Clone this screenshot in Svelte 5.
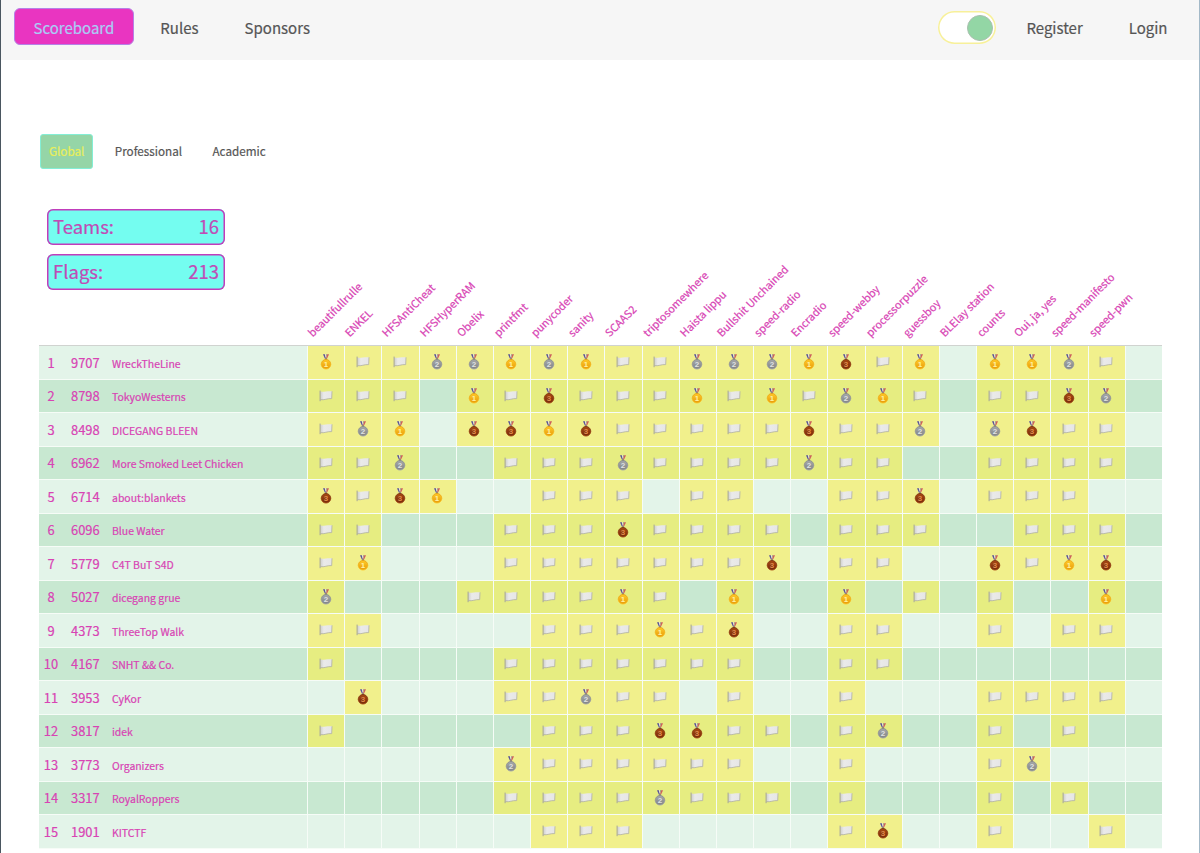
<script lang="ts">

    const navLeft = ['Scoreboard', 'Rules', 'Sponsors']
    const scopes = ['Global', 'Professional', 'Academic']

    const challenges = [
        'beautifullrulle', 'ENKEL', 'HFSAntiCheat', 'HFSHyperRAM', 'Obelix', 'printfmt',
        'punycoder', 'sanity', 'SCAAS2', 'triptosomewhere', 'Haista lippu', 'Bullshit Unchained',
        'speed-radio', 'Encradio', 'speed-webby', 'processorpuzzle', 'guessboy', 'BLElay station',
        'counts', 'Oui, ja, yes', 'speed-manifesto', 'speed-pwn', ''
    ]

    // one character per challenge: 1-3 = medal, f = solved, . = unsolved
    const teams = [
        { name: 'WreckTheLine', score: 9707, solves: '1ff22121ff22213f1.112f.' },
        { name: 'TokyoWesterns', score: 8798, solves: 'fff.1f3fff1f1f21f.ff32.' },
        { name: 'DICEGANG BLEEN', score: 8498, solves: 'f21.3313fffff3ff2.23ff.' },
        { name: 'More Smoked Leet Chicken', score: 6962, solves: 'ff2..fff2ffff2ff..ffff.' },
        { name: 'about:blankets', score: 6714, solves: '3f31..fff.ff..ff3.fff..' },
        { name: 'Blue Water', score: 6096, solves: 'ff...fff3ffff.fff..fff.' },
        { name: 'C4T BuT S4D', score: 5779, solves: 'f1...fffffff3.ff..3f13.' },
        { name: 'dicegang grue', score: 5027, solves: '2...ffff1f.1..1.f.f..1.' },
        { name: 'ThreeTop Walk', score: 4373, solves: 'ff....fff1f3..ff..f.ff.' },
        { name: 'SNHT && Co.', score: 4167, solves: 'f....fffffff..ff.......' },
        { name: 'CyKor', score: 3953, solves: '.3...ff2ff.f..f...ffff.' },
        { name: 'idek', score: 3817, solves: 'f.....fff33ff.f2..f.f..' },
        { name: 'Organizers', score: 3773, solves: '.....2ffffff..f...f2...' },
        { name: 'RoyalRoppers', score: 3317, solves: '.....ffff2fff.f...f.f..' },
        { name: 'KITCTF', score: 1901, solves: '......fff.....f3..f..f.' }
    ]

    let activeNav = $state('Scoreboard')
    let activeScope = $state('Global')
    let toggled = $state(true)

</script>


{#snippet flag()}
    <svg class="flag" viewBox="0 0 14 12">
        <path d="M1.3 1.6C4.2 2.4 8 .8 13 1.3L12.7 8.6C8.5 8.2 5 10.4 1.5 9.6Z" fill="url(#cloth)" />
        <path d="M1.5 9.6C5 10.4 8.5 8.2 12.7 8.6L13 1.3" fill="none" stroke="#aeaea6" stroke-width=".8" />
        <path d="M1.1 .6V11.2" stroke="#a3a39c" stroke-width="1" />
    </svg>
{/snippet}

{#snippet medal(place: string)}
    <svg class="medal" viewBox="0 0 12 16">
        <path d="M3 .2H4.9L6.4 5H5.1Z" fill="#5a5498" />
        <path d="M4.9 .2H5.5L6.7 4.2H6Z" fill="#f4eef0" />
        <path d="M9 .2H7.2L5.8 5H6.9Z" fill="#cc5f5c" />
        <path d="M7.2 .2H6.5L6 3Z" fill="#4d4f96" />
        <rect x="5" y="4" width="2" height="1.8" fill="#968873" />
        <circle cx="6" cy="10.3" r="4.8" fill="url(#medal{place})" stroke="url(#rim{place})" stroke-width=".8" />
        <text x="6" y="13.2" text-anchor="middle" class="n{place}">{place}</text>
    </svg>
{/snippet}

<svg class="defs" width="0" height="0">
    <defs>
        <linearGradient id="cloth">
            <stop offset="0" stop-color="#cfcfcf" />
            <stop offset=".3" stop-color="#eaeaea" />
            <stop offset="1" stop-color="#e6e6e6" />
        </linearGradient>
        {#each [['1', '#ffca28', '#e79a0a'], ['2', '#a6a9ab', '#808386'], ['3', '#a94a12', '#75290a']] as [id, from, to]}
            <linearGradient id="medal{id}" x2="0" y2="1">
                <stop offset="0" stop-color={from} />
                <stop offset="1" stop-color={to} />
            </linearGradient>
            <linearGradient id="rim{id}" x2="0" y2="1">
                <stop offset="0" stop-color={to} />
                <stop offset="1" stop-color={from} />
            </linearGradient>
        {/each}
    </defs>
</svg>

<div class="page">
    <header>
        <nav>
            {#each navLeft as item}
                <button class:active={activeNav === item} onclick={() => (activeNav = item)}>{item}</button>
            {/each}
        </nav>
        <nav class="right">
            <button class="toggle" class:on={toggled} aria-label="Toggle theme" onclick={() => (toggled = !toggled)}>
                <span class="knob"></span>
            </button>
            <button>Register</button>
            <button>Login</button>
        </nav>
    </header>

    <main>
        <div class="scopes">
            {#each scopes as scope}
                <button class:active={activeScope === scope} onclick={() => (activeScope = scope)}>{scope}</button>
            {/each}
        </div>

        <div class="stats">
            <div class="stat"><span>Teams:</span><span>16</span></div>
            <div class="stat"><span>Flags:</span><span>213</span></div>
        </div>

        <div class="board">
            <div class="row head">
                <div class="team"></div>
                {#each challenges as challenge}
                    <div class="label"><span>{challenge}</span></div>
                {/each}
            </div>
            {#each teams as team, i}
                <div class="row">
                    <div class="team">
                        <span class="rank">{i + 1}</span>
                        <span class="score">{team.score}</span>
                        <span class="name">{team.name}</span>
                    </div>
                    {#each team.solves as solve}
                        <div class="cell" class:solved={solve !== '.'}>
                            {#if solve === 'f'}
                                {@render flag()}
                            {:else if solve !== '.'}
                                {@render medal(solve)}
                            {/if}
                        </div>
                    {/each}
                </div>
            {/each}
        </div>
    </main>
</div>


<style>

    :global(body) {
        margin: 0;
        background: #fff;
    }

    .defs {
        position: absolute;
    }

    .page {
        box-sizing: border-box;
        height: 853px;
        overflow: hidden;
        border-left: 1px solid #4a5660;
        border-right: 1px solid #a3b9c8;
        color: #555;
        font-family: "Noto Sans CJK SC", "Noto Sans", sans-serif;
        -webkit-text-stroke: 0.2px;
    }

    button {
        box-sizing: border-box;
        background: none;
        border: 1px solid transparent;
        padding: 0;
        color: inherit;
        font-family: inherit;
        cursor: pointer;
    }

    header {
        box-sizing: border-box;
        display: flex;
        justify-content: space-between;
        height: 60px;
        padding: 8px 12px 0 13px;
        background: #f6f6f6;
    }

    nav {
        display: flex;
        align-items: flex-start;
        gap: 7px;
    }

    nav button {
        height: 37px;
        padding: 0 18.5px;
        border-radius: 6px;
        font-size: 15px;
        line-height: 37px;
    }

    nav button.active {
        color: #a9cdf5;
        background: #e935c1;
        border-color: #b581e6;
    }

    nav .toggle {
        display: flex;
        align-items: center;
        width: 58px;
        height: 33px;
        margin: 3px 4px 0 0;
        padding: 0 2px;
        border: none;
        border-radius: 17px;
        background: #fff;
        box-shadow: inset 0 0 0 1.5px #f7f09a;
    }

    .toggle.on {
        justify-content: flex-end;
    }

    .knob {
        box-sizing: border-box;
        width: 26px;
        height: 26px;
        margin-right: 1px;
        border: 1px solid #a9bfae;
        border-radius: 50%;
        background: #93d6a5;
    }

    main {
        padding: 74px 37px 0 38px;
    }

    .scopes {
        display: flex;
        gap: 12.4px;
        padding-left: 1px;
    }

    .scopes button {
        height: 35px;
        padding: 0 8px 2px;
        border-radius: 3px;
        font-size: 11.7px;
        line-height: 31px;
    }

    .scopes button.active {
        color: #e9ef5a;
        background: #95d5a7;
        border-color: #84eed6;
    }

    .stats {
        display: flex;
        flex-direction: column;
        gap: 8.5px;
        width: 178px;
        margin: 40px 0 0 8px;
    }

    .stat {
        box-sizing: border-box;
        display: flex;
        justify-content: space-between;
        height: 36px;
        padding: 0 6px;
        border-radius: 6px;
        background: #74fdf0;
        box-shadow: inset 0 0 0 1.5px #c23cbb;
        color: #c04cb6;
        font-size: 18.5px;
        line-height: 35px;
    }

    .board {
        color: #d843b4;
    }

    .row {
        display: flex;
        box-sizing: border-box;
        height: 33.5px;
        background: #e3f4e9;
    }

    .row:nth-child(odd) {
        background: #c8e8d1;
    }

    .row.head {
        height: 56.5px;
        background: none;
        border-bottom: 1px solid #d0d3d0;
    }

    .team, .cell {
        box-sizing: border-box;
        border-bottom: 1px solid #f6fcf7;
    }

    .head .team {
        border: none;
    }

    .team {
        display: flex;
        flex: none;
        align-items: center;
        width: 268px;
    }

    .rank {
        width: 24px;
        text-align: center;
        font-size: 12.9px;
    }

    .score {
        width: 49px;
        padding-left: 8px;
        box-sizing: border-box;
        font-size: 12.9px;
    }

    .name {
        padding-top: 1.5px;
        font-size: 10.45px;
    }

    .cell {
        display: flex;
        flex: 1;
        align-items: center;
        justify-content: center;
        border-left: 1px solid #f6fcf7;
    }

    .solved {
        background: #f1f08c;
    }

    .row:nth-child(odd) .solved {
        background: #e6ed81;
    }

    .label {
        display: flex;
        flex: 1;
        align-items: flex-end;
        width: 0;
    }

    .label span {
        white-space: nowrap;
        font-size: 10.75px;
        line-height: 16px;
        transform: translate(8.7px, -4.6px) rotate(-45deg);
        transform-origin: 0 100%;
    }

    .flag {
        width: 14px;
        height: 12px;
        margin-right: 1px;
    }

    .medal {
        width: 12px;
        height: 16px;
        margin-right: 1px;
    }

    .medal text {
        font-family: "Liberation Sans", sans-serif;
        font-size: 8px;
        font-weight: bold;
        -webkit-text-stroke: 0;
    }

    .n1 {
        fill: #fff0a0;
    }

    .n2 {
        fill: #dfe1e2;
    }

    .n3 {
        fill: #df8a4c;
    }

</style>
